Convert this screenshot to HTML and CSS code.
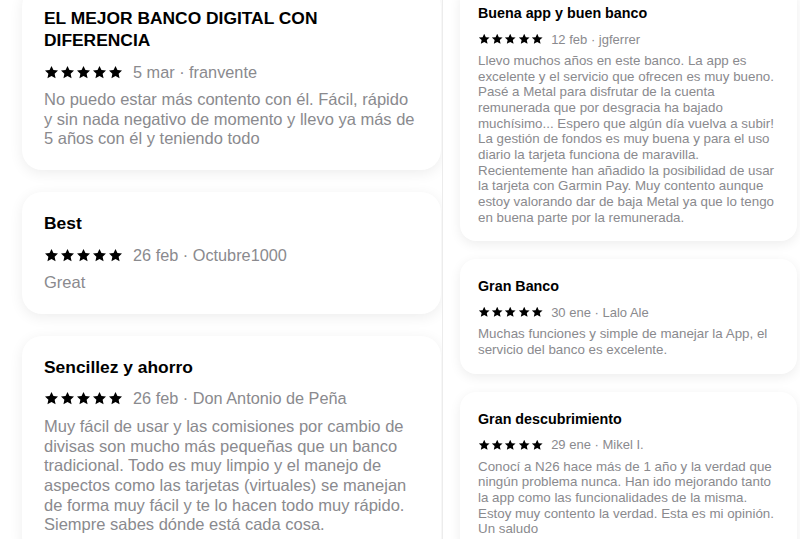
FILE: index.html
```html
<!DOCTYPE html>
<html lang="es">
<head>
<meta charset="utf-8">
<title>Reseñas</title>
<link rel="stylesheet" href="styles.css">
</head>
<body>
<svg width="0" height="0" class="defs">
  <defs>
    <symbol id="star" viewBox="0 0 24 24"><path d="M12 1.4l3.1 6.6 7.3.85-5.4 4.95 1.5 7.2L12 17.4l-6.5 3.6 1.5-7.2-5.4-4.95 7.3-.85z"/></symbol>
  </defs>
</svg>
<div class="page">
  <section class="col col-large">
    <article class="card">
      <h2 class="title">EL MEJOR BANCO DIGITAL CON<br>DIFERENCIA</h2>
      <div class="meta">
        <span class="stars"><svg><use href="#star"/></svg><svg><use href="#star"/></svg><svg><use href="#star"/></svg><svg><use href="#star"/></svg><svg><use href="#star"/></svg></span>
        <span class="info">5 mar · franvente</span>
      </div>
      <p class="body">No puedo estar más contento con él. Fácil, rápido<br>y sin nada negativo de momento y llevo ya más de<br>5 años con él y teniendo todo</p>
    </article>
    <article class="card">
      <h2 class="title">Best</h2>
      <div class="meta">
        <span class="stars"><svg><use href="#star"/></svg><svg><use href="#star"/></svg><svg><use href="#star"/></svg><svg><use href="#star"/></svg><svg><use href="#star"/></svg></span>
        <span class="info">26 feb · Octubre1000</span>
      </div>
      <p class="body">Great</p>
    </article>
    <article class="card">
      <h2 class="title">Sencillez y ahorro</h2>
      <div class="meta">
        <span class="stars"><svg><use href="#star"/></svg><svg><use href="#star"/></svg><svg><use href="#star"/></svg><svg><use href="#star"/></svg><svg><use href="#star"/></svg></span>
        <span class="info">26 feb · Don Antonio de Peña</span>
      </div>
      <p class="body">Muy fácil de usar y las comisiones por cambio de<br>divisas son mucho más pequeñas que un banco<br>tradicional. Todo es muy limpio y el manejo de<br>aspectos como las tarjetas (virtuales) se manejan<br>de forma muy fácil y te lo hacen todo muy rápido.<br>Siempre sabes dónde está cada cosa.</p>
    </article>
  </section>
  <section class="col col-small">
    <article class="card">
      <h2 class="title">Buena app y buen banco</h2>
      <div class="meta">
        <span class="stars"><svg><use href="#star"/></svg><svg><use href="#star"/></svg><svg><use href="#star"/></svg><svg><use href="#star"/></svg><svg><use href="#star"/></svg></span>
        <span class="info">12 feb · jgferrer</span>
      </div>
      <p class="body">Llevo muchos años en este banco. La app es<br>excelente y el servicio que ofrecen es muy bueno.<br>Pasé a Metal para disfrutar de la cuenta<br>remunerada que por desgracia ha bajado<br>muchísimo... Espero que algún día vuelva a subir!<br>La gestión de fondos es muy buena y para el uso<br>diario la tarjeta funciona de maravilla.<br>Recientemente han añadido la posibilidad de usar<br>la tarjeta con Garmin Pay. Muy contento aunque<br>estoy valorando dar de baja Metal ya que lo tengo<br>en buena parte por la remunerada.</p>
    </article>
    <article class="card">
      <h2 class="title">Gran Banco</h2>
      <div class="meta">
        <span class="stars"><svg><use href="#star"/></svg><svg><use href="#star"/></svg><svg><use href="#star"/></svg><svg><use href="#star"/></svg><svg><use href="#star"/></svg></span>
        <span class="info">30 ene · Lalo Ale</span>
      </div>
      <p class="body">Muchas funciones y simple de manejar la App, el<br>servicio del banco es excelente.</p>
    </article>
    <article class="card">
      <h2 class="title">Gran descubrimiento</h2>
      <div class="meta">
        <span class="stars"><svg><use href="#star"/></svg><svg><use href="#star"/></svg><svg><use href="#star"/></svg><svg><use href="#star"/></svg><svg><use href="#star"/></svg></span>
        <span class="info">29 ene · Mikel I.</span>
      </div>
      <p class="body">Conocí a N26 hace más de 1 año y la verdad que<br>ningún problema nunca. Han ido mejorando tanto<br>la app como las funcionalidades de la misma.<br>Estoy muy contento la verdad. Esta es mi opinión.<br>Un saludo</p>
    </article>
  </section>
</div>
</body>
</html>
```

FILE: styles.css
```css
html, body {
  margin: 0;
  padding: 0;
  background: #ffffff;
}
body {
  width: 800px;
  height: 539px;
  overflow: hidden;
  font-family: "Liberation Sans", Arial, sans-serif;
  -webkit-font-smoothing: antialiased;
}
.defs {
  position: absolute;
  width: 0;
  height: 0;
}
.page {
  display: flex;
  height: 539px;
}
.col {
  display: flex;
  flex-direction: column;
  overflow: hidden;
  height: 100%;
}
.card {
  background: #ffffff;
  flex: none;
}
.title {
  margin: 0;
  color: #000000;
  font-weight: 700;
}
.meta {
  display: flex;
  align-items: center;
}
.stars {
  display: flex;
  align-items: center;
}
.stars svg {
  display: block;
  fill: #000000;
}
.info {
  color: #8a8a8e;
}
.body {
  margin: 0;
  color: #8a8a8e;
  white-space: nowrap;
}

/* Left, larger column */
.col-large {
  width: 442px;
  flex: none;
  gap: 22px;
  padding: 0 0 40px 22px;
  box-sizing: border-box;
  margin-top: -13px;
  height: calc(100% + 13px);
}
.col-large .card {
  width: 419px;
  box-sizing: border-box;
  padding: 20px 22px 21px;
  border-radius: 20px;
  box-shadow: 0 3px 14px rgba(0, 0, 0, 0.075);
}
.col-large .title {
  font-size: 17.4px;
  line-height: 22px;
  margin-bottom: 10px;
}
.col-large .meta {
  height: 22px;
  margin-bottom: 7px;
}
.col-large .stars {
  gap: 1px;
  margin-right: 10px;
}
.col-large .stars svg {
  width: 15px;
  height: 15px;
}
.col-large .info {
  font-size: 16.3px;
}
.col-large .body {
  font-size: 16.5px;
  line-height: 19.7px;
}

/* Right, smaller column */
.col-small {
  flex: 1;
  gap: 18px;
  padding: 0 0 40px 17px;
  border-left: 1px solid #ececec;
  box-sizing: border-box;
  margin-top: -14px;
  height: calc(100% + 14px);
}
.col-small .card {
  width: 337px;
  box-sizing: border-box;
  padding: 18px 18px 16px;
  border-radius: 16px;
  box-shadow: 0 3px 12px rgba(0, 0, 0, 0.075);
}
.col-small .title {
  font-size: 14.3px;
  line-height: 18px;
  margin-bottom: 8px;
}
.col-small .meta {
  height: 18px;
  margin-bottom: 5px;
}
.col-small .stars {
  gap: 0.8px;
  margin-right: 8px;
}
.col-small .stars svg {
  width: 12.4px;
  height: 12.4px;
}
.col-small .info {
  font-size: 13px;
}
.col-small .body {
  font-size: 13.35px;
  line-height: 15.67px;
}
```
